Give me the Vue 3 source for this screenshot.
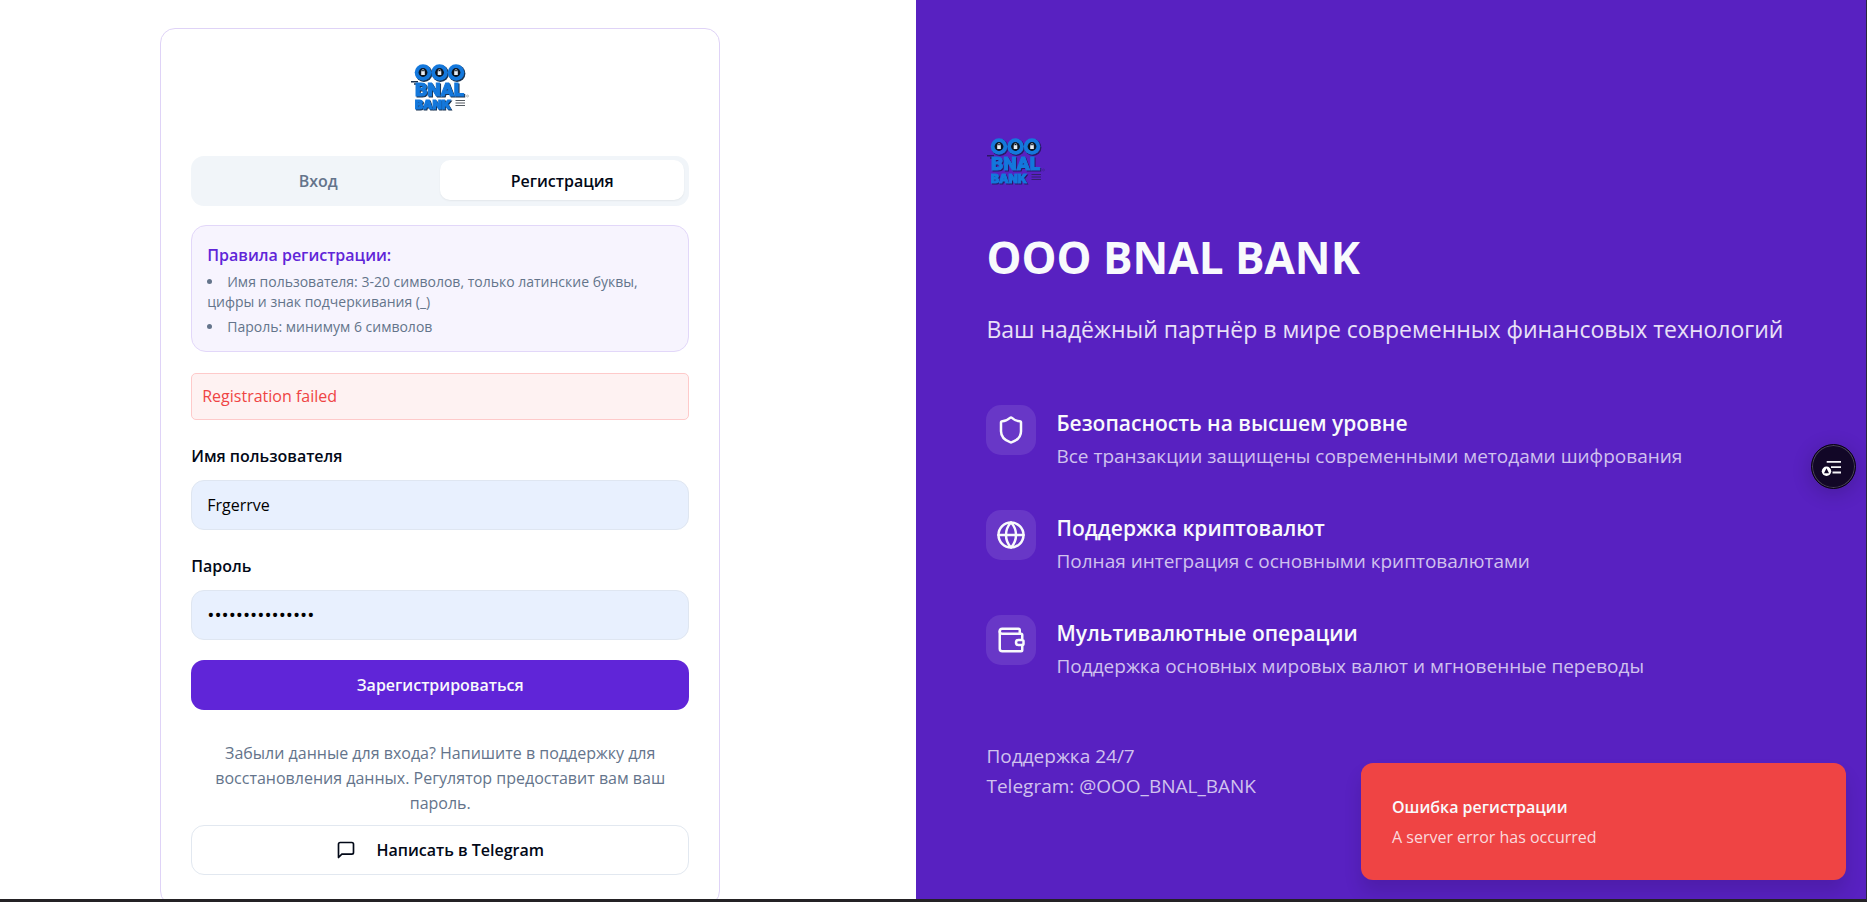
<script setup>
import { ref, h } from 'vue'

const tab = ref('register')
const username = ref('Frgerrve')
const password = ref('qwertyuiop12345')

const features = [
  {
    title: 'Безопасность на высшем уровне',
    text: 'Все транзакции защищены современными методами шифрования',
    paths: ['M20 13c0 5-3.5 7.5-7.66 8.95a1 1 0 0 1-.67-.01C7.5 20.5 4 18 4 13V6a1 1 0 0 1 1-1c2 0 4.500-1.200 6.240-2.720a1.170 1.170 0 0 1 1.520 0C14.510 3.810 17 5 19 5a1 1 0 0 1 1 1z']
  },
  {
    title: 'Поддержка криптовалют',
    text: 'Полная интеграция с основными криптовалютами',
    paths: ['M22 12a10 10 0 1 1-20 0 10 10 0 0 1 20 0z', 'M12 2a14.500 14.500 0 0 0 0 20 14.500 14.500 0 0 0 0-20', 'M2 12h20']
  },
  {
    title: 'Мультивалютные операции',
    text: 'Поддержка основных мировых валют и мгновенные переводы',
    paths: ['M19 7V4a1 1 0 0 0-1-1H5a2 2 0 0 0 0 4h15a1 1 0 0 1 1 1v4h-3a2 2 0 0 0 0 4h3a1 1 0 0 0 1-1v-2a1 1 0 0 0-1-1', 'M3 5v14a2 2 0 0 0 2 2h15a1 1 0 0 0 1-1v-4']
  }
]

const BankLogo = (props) => {
  const word = (x, y, size, family, value) =>
    h('text', {
      x, y, fill: '#1478dc', stroke: '#1478dc', 'stroke-width': 1,
      'font-family': family, 'font-weight': 900, 'font-size': size,
      style: { filter: `drop-shadow(1px 1px 0 ${props.shade})` }
    }, value)
  return h('svg', { width: 60, height: 60, viewBox: '0 0 60 60', role: 'img', 'aria-label': 'OOO BNAL BANK' }, [
    ...[13, 29.5, 46].flatMap((x) => [
      h('circle', { cx: x + 1, cy: 16.5, r: 8.4, fill: props.shade }),
      h('circle', { cx: x, cy: 15.5, r: 8.3, fill: '#1478dc' }),
      h('circle', { cx: x, cy: 15.5, r: 4.4, fill: '#0b1420' }),
      h('rect', { x: x - 1.8, y: 14.2, width: 3.6, height: 3.8, fill: '#e8eef4' }),
      h('path', { d: `M${x - 1.1} 14.500v-1a1.100 1.100 0 0 1 2.200 0v1`, fill: 'none', stroke: '#c4ccd4', 'stroke-width': 0.7 })
    ]),
    h('path', { d: 'M1 24.800h7M4 27h5', stroke: props.shade, 'stroke-width': 1.4 }),
    word(5, 38.5, 19, 'Roboto, sans-serif', 'BNAL'),
    word(5, 52, 12, 'Inter, sans-serif', 'BANK'),
    h('path', { d: 'M45.500 43.500H55M45.500 46H55M45.500 48.500H55', stroke: props.lines, 'stroke-width': 1.2 }),
    h('circle', { cx: 57.5, cy: 39, r: 1, fill: 'none', stroke: props.lines, 'stroke-width': 0.4 })
  ])
}
BankLogo.props = ['shade', 'lines']
</script>

<template>
  <div class="page">
    <main class="auth">
      <section class="card">
        <div class="card-logo"><BankLogo shade="#1b3350" lines="#555b62" /></div>

        <div class="tabs" role="tablist">
          <button type="button" role="tab" :class="{ active: tab === 'login' }" :aria-selected="tab === 'login'" @click="tab = 'login'">Вход</button>
          <button type="button" role="tab" :class="{ active: tab === 'register' }" :aria-selected="tab === 'register'" @click="tab = 'register'">Регистрация</button>
        </div>

        <div class="rules">
          <h2>Правила регистрации:</h2>
          <ul>
            <li>Имя пользователя: 3-20 символов, только латинские буквы, цифры и знак подчеркивания (_)</li>
            <li>Пароль: минимум 6 символов</li>
          </ul>
        </div>

        <p class="error" role="alert">Registration failed</p>

        <form @submit.prevent>
          <div class="field">
            <label for="username">Имя пользователя</label>
            <input id="username" v-model="username" type="text" autocomplete="off">
          </div>
          <div class="field">
            <label for="password">Пароль</label>
            <input id="password" v-model="password" type="password" autocomplete="off">
          </div>
          <button class="submit" type="submit">Зарегистрироваться</button>
        </form>

        <p class="hint">Забыли данные для входа? Напишите в поддержку для восстановления данных. Регулятор предоставит вам ваш пароль.</p>
        <button class="telegram" type="button">
          <svg width="20" height="20" viewBox="0 0 24 24" aria-hidden="true"><path d="M21 15a2 2 0 0 1-2 2H7l-4 4V5a2 2 0 0 1 2-2h14a2 2 0 0 1 2 2z" /></svg>
          Написать в Telegram
        </button>
      </section>
    </main>

    <aside class="promo">
      <BankLogo shade="#2b1766" lines="#35206e" />
      <h1>OOO BNAL BANK</h1>
      <p class="lead">Ваш надёжный партнёр в мире современных финансовых технологий</p>
      <ul class="features">
        <li v-for="f in features" :key="f.title">
          <span class="tile">
            <svg width="30" height="30" viewBox="0 0 24 24" aria-hidden="true"><path v-for="d in f.paths" :key="d" :d="d" /></svg>
          </span>
          <div>
            <h3>{{ f.title }}</h3>
            <p>{{ f.text }}</p>
          </div>
        </li>
      </ul>
      <p class="support">Поддержка 24/7<br>Telegram: @OOO_BNAL_BANK</p>
    </aside>

    <button class="fab" type="button" aria-label="Меню">
      <svg width="24" height="24" viewBox="0 0 24 24" aria-hidden="true">
        <path d="M4.700 6.800H19M9 12.200h10M10.500 17.500H19" fill="none" stroke="#f4f2f7" stroke-width="1.800" />
        <circle cx="4.500" cy="16.300" r="4.700" fill="#fff" />
        <path d="M4.500 13.300l2.500 5H2z" fill="#120727" />
      </svg>
    </button>

    <div class="toast" role="status">
      <strong>Ошибка регистрации</strong>
      <span>A server error has occurred</span>
    </div>
  </div>
</template>

<style>
body { margin: 0; background: #fff; }
</style>

<style scoped>
* { box-sizing: border-box; }
h1, h2, h3, p, ul { margin: 0; padding: 0; }
button, input { font: inherit; }
button { cursor: pointer; }

.page {
  position: relative;
  display: grid;
  grid-template-columns: 916fr 949fr;
  height: 100vh;
  overflow: hidden;
  border-right: 1px solid #2a2440;
  border-bottom: 3px solid #242225;
  background: #fff;
  color: #020817;
  font-family: "Open Sans", "Noto Sans", sans-serif;
  font-size: 16px;
  line-height: 25px;
}

.auth {
  display: flex;
  justify-content: center;
  align-items: flex-start;
  padding: 28px 36px 28px 0;
}
.card {
  width: 100%;
  max-width: 560px;
  padding: 28px 30px 30px;
  border: 1px solid #dfd3f7;
  border-radius: 15px;
  background: #fff;
}
.card-logo { display: flex; justify-content: center; margin-bottom: 39px; }
.card-logo svg, .promo > svg { display: block; overflow: visible; }

.tabs {
  display: grid;
  grid-template-columns: 1fr 1fr;
  align-items: start;
  height: 50px;
  padding: 4px 5px;
  border-radius: 13px;
  background: #f1f5f9;
}
.tabs button {
  height: 40px;
  padding: 2px 0 0;
  border: 0;
  border-radius: 10px;
  background: transparent;
  color: #64748b;
  font-weight: 600;
}
.tabs .active {
  background: #fff;
  color: #020817;
  box-shadow: 0 1px 2px rgba(0, 0, 0, 0.06);
}

.rules {
  margin-top: 19px;
  padding: 16px 15px 14px;
  border: 1px solid #e2d7f9;
  border-radius: 15px;
  background: #f7f4fe;
}
.rules h2 { color: #6025d8; font-size: 16px; font-weight: 600; line-height: 26px; }
.rules ul {
  display: flex;
  flex-direction: column;
  gap: 5px;
  margin-top: 4px;
  list-style: disc inside;
  color: #64748b;
  font-size: 14px;
  line-height: 20px;
}

.error {
  margin: 21px 0 24px;
  padding: 10px;
  border: 1px solid #fecaca;
  border-radius: 5px;
  background: #fef2f2;
  color: #ef4444;
}

.field { margin-bottom: 24px; }
.field label { display: block; margin-bottom: 11px; font-weight: 600; }
.field input {
  display: block;
  width: 100%;
  height: 50px;
  padding: 0 15px;
  border: 1px solid #dfe6f1;
  border-radius: 13px;
  outline: 0;
  background: #e8f0fe;
  color: #000;
}
.field input[type="password"] { font-size: 19px; }
.field:nth-child(2) { margin-bottom: 20px; }
.submit {
  width: 100%;
  height: 50px;
  border: 0;
  border-radius: 13px;
  background: #6025d8;
  color: #f8fafc;
  font-weight: 600;
}
.hint { margin: 31px 0 9px; padding: 0 10px; color: #64748b; text-align: center; }
.telegram {
  display: flex;
  align-items: center;
  justify-content: center;
  gap: 20px;
  width: 100%;
  height: 50px;
  border: 1px solid #e2e8f0;
  border-radius: 13px;
  background: #fff;
  color: #020817;
  font-weight: 600;
}
.telegram path, .tile path {
  fill: none;
  stroke: currentColor;
  stroke-width: 2;
  stroke-linecap: round;
  stroke-linejoin: round;
}

.promo {
  padding: 131px 70px 60px;
  background: #5821c1;
  color: #f8fafc;
}
.promo h1 { margin-top: 38px; font-size: 44px; font-weight: 700; line-height: 56px; }
.lead { margin-top: 26px; color: #e8e0f7; font-size: 23px; line-height: 36px; }
.features { display: flex; flex-direction: column; gap: 39px; margin-top: 58px; list-style: none; }
.features li { display: flex; gap: 20px; }
.tile {
  display: flex;
  align-items: center;
  justify-content: center;
  flex: none;
  width: 50px;
  height: 50px;
  border-radius: 15px;
  background: #6837c7;
}
.features h3 { font-size: 21px; font-weight: 600; line-height: 36px; }
.features p, .support { color: #d0c2ee; font-size: 19px; line-height: 30px; }
.support { margin-top: 60px; }

.fab {
  position: absolute;
  top: 444px;
  right: 10px;
  display: flex;
  align-items: center;
  justify-content: center;
  width: 45px;
  height: 45px;
  padding: 0;
  border: 1px solid #08030f;
  border-radius: 50%;
  background: #120727;
  box-shadow: inset 0 0 0 1px #4a4358, 0 4px 20px rgba(0, 0, 0, 0.2);
}
.fab svg { overflow: visible; }
.toast {
  position: absolute;
  right: 20px;
  bottom: 19px;
  display: flex;
  flex-direction: column;
  gap: 5px;
  width: 485px;
  padding: 32px 31px 30px;
  border-radius: 12px;
  background: #ef4444;
  box-shadow: 0 12px 18px rgba(0, 0, 0, 0.12);
  color: #f8fafc;
}
.toast strong { font-weight: 600; }
.toast span { color: #fad9dc; }
</style>
